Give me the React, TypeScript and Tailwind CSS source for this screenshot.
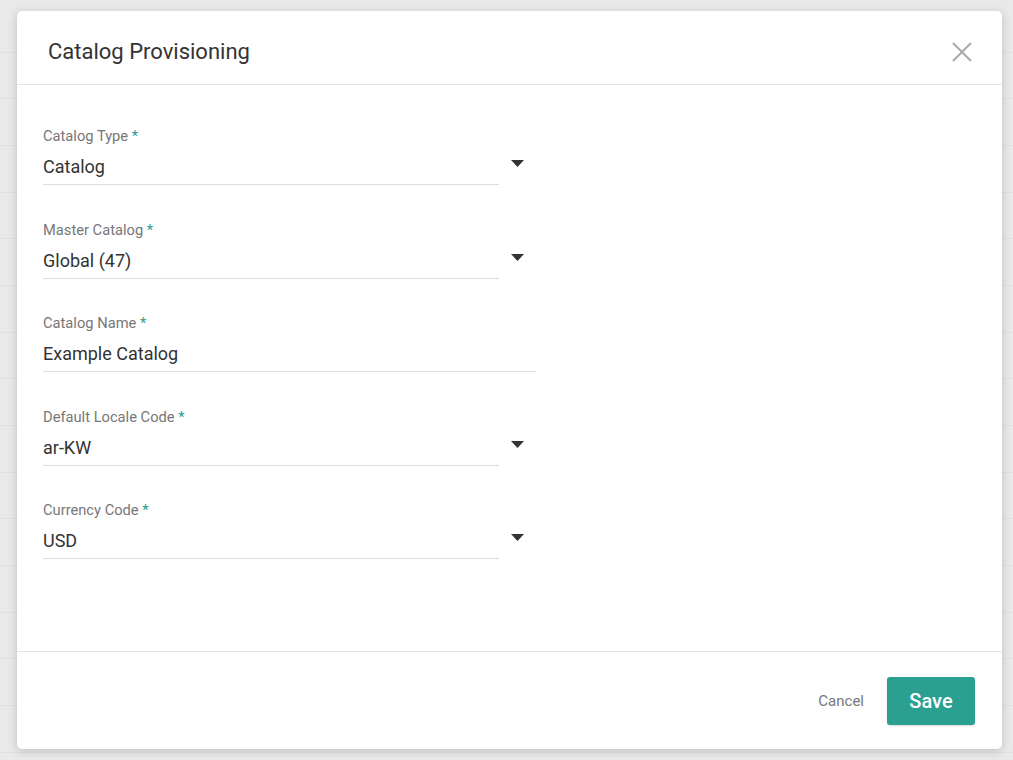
import React from "react";

const font = { fontFamily: "Roboto, 'Liberation Sans', sans-serif" };

function Caret() {
  return (
    <svg width="13" height="7" viewBox="0 0 13 7" className="shrink-0">
      <path d="M0 0 H13 L6.5 7 Z" fill="#333333" />
    </svg>
  );
}

function Label({ text }: { text: string }) {
  return (
    <div className="text-[14.7px] leading-[16px] text-[#777777]">
      {text} <span className="text-[#2a9d8f]">*</span>
    </div>
  );
}

function SelectField({ label, value }: { label: string; value: string }) {
  return (
    <div className="flex flex-col">
      <Label text={label} />
      <div className="mt-[11px] flex items-center">
        <div className="w-[456px] border-b border-[#dddddd] pb-[5px] text-[18px] leading-[24px] text-[#333333]">
          {value}
        </div>
        <div className="ml-[12px] -mt-[13px] flex items-center">
          <Caret />
        </div>
      </div>
    </div>
  );
}

function TextField({ label, value }: { label: string; value: string }) {
  return (
    <div className="flex flex-col">
      <Label text={label} />
      <div className="mt-[11px] w-[493px] border-b border-[#dddddd] pb-[5px] text-[18px] leading-[24px] text-[#333333]">
        {value}
      </div>
    </div>
  );
}

export default function App() {
  const rows = Array.from({ length: 17 });
  return (
    <div className="relative h-[760px] w-full overflow-hidden bg-[#e9e9e9]" style={font}>
      <div className="flex flex-col pt-[6px]">
        {rows.map((_, i) => (
          <div key={i} className="h-[46.67px] border-b border-[#e1e1e1]" />
        ))}
      </div>
      <div className="absolute left-[17px] top-[11px] flex h-[738px] w-[985px] flex-col rounded-[5px] bg-white shadow-[0_2px_10px_rgba(0,0,0,0.18)]">
        <div className="flex h-[74px] shrink-0 items-center justify-between border-b border-[#e5e5e5] pl-[31px] pr-[30px] pt-[9px]">
          <div className="text-[22px] leading-[26px] text-[#333333]">Catalog Provisioning</div>
          <svg width="20" height="20" viewBox="0 0 20 20">
            <path d="M1 1 L19 19 M19 1 L1 19" stroke="#aaaaaa" strokeWidth="2" />
          </svg>
        </div>
        <div className="flex flex-1 flex-col gap-[36.5px] border-b border-[#e5e5e5] pl-[26px] pt-[43px]">
          <SelectField label="Catalog Type" value="Catalog" />
          <SelectField label="Master Catalog" value="Global (47)" />
          <TextField label="Catalog Name" value="Example Catalog" />
          <SelectField label="Default Locale Code" value="ar-KW" />
          <SelectField label="Currency Code" value="USD" />
        </div>
        <div className="flex h-[97px] shrink-0 items-center justify-end pr-[27px]">
          <button className="mr-[23px] text-[15px] leading-[16px] text-[#777777]">Cancel</button>
          <button className="flex h-[48px] w-[88px] items-center justify-center rounded-[3px] bg-[#2ba090] text-[20px] font-medium text-white shadow-[0_1px_2px_rgba(0,0,0,0.15)]">
            Save
          </button>
        </div>
      </div>
    </div>
  );
}
